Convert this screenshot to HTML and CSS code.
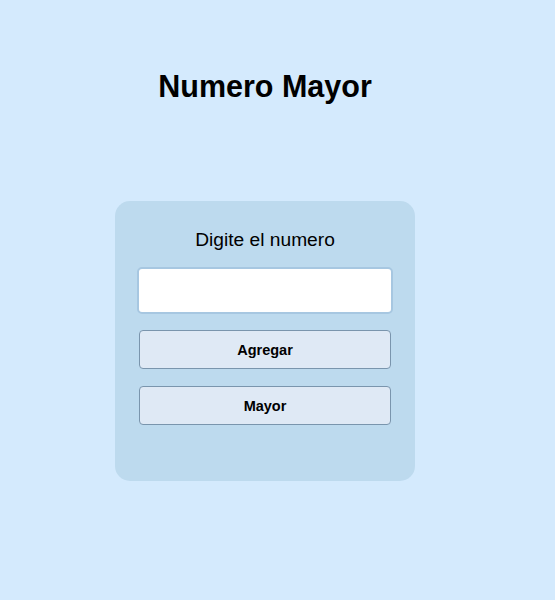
FILE: index.html
```html
<!DOCTYPE html>
<html lang="es">
<head>
<meta charset="utf-8">
<title>Numero Mayor</title>
<link rel="stylesheet" href="styles.css">
</head>
<body>
<main class="page">
  <h1 class="title">Numero Mayor</h1>
  <section class="card">
    <label class="label" for="num">Digite el numero</label>
    <input class="field" id="num" type="text">
    <button class="btn" type="button">Agregar</button>
    <button class="btn btn-last" type="button">Mayor</button>
  </section>
</main>
</body>
</html>
```
FILE: styles.css
```css
html, body {
  margin: 0;
  padding: 0;
  background: #d4eafd;
  height: 100%;
}
body {
  font-family: "Liberation Sans", Arial, sans-serif;
  color: #000;
}
.page {
  width: 530px;
  display: flex;
  flex-direction: column;
  align-items: center;
}
.title {
  margin: 68px 0 0;
  font-size: 30.5px;
  line-height: 36px;
  font-weight: bold;
}
.card {
  margin-top: 97px;
  width: 300px;
  box-sizing: border-box;
  background: #bddaee;
  border-radius: 15px;
  padding: 28px 0 56px;
  display: flex;
  flex-direction: column;
  align-items: center;
}
.label {
  font-size: 19.2px;
  line-height: 22px;
  margin-bottom: 16px;
}
.field {
  width: 256px;
  height: 47px;
  box-sizing: border-box;
  border: 2px solid #a7c7e1;
  border-radius: 5px;
  background: #fff;
  margin: 0 0 16px;
  padding: 0 8px;
  font-size: 16px;
}
.btn {
  width: 252px;
  height: 39px;
  box-sizing: border-box;
  border: 1px solid #7a95ad;
  border-radius: 4px;
  background: #dfe9f5;
  font-family: "Liberation Sans", Arial, sans-serif;
  font-size: 14.5px;
  font-weight: bold;
  color: #000;
  margin: 0 0 17px;
  padding: 0;
}
.btn-last {
  margin-bottom: 0;
}
```
